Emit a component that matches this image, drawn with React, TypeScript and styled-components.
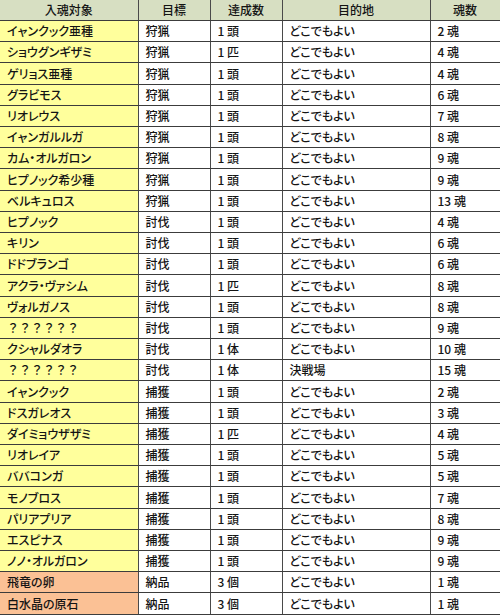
import React from 'react'
import styled, { createGlobalStyle } from 'styled-components'

type Kind = 'monster' | 'item'

interface RowData {
  target: string
  goal: string
  count: string
  place: string
  souls: string
  kind: Kind
}

const rows: RowData[] = [
  { target: 'イャンクック亜種', goal: '狩猟', count: '1 頭', place: 'どこでもよい', souls: '2 魂', kind: 'monster' },
  { target: 'ショウグンギザミ', goal: '狩猟', count: '1 匹', place: 'どこでもよい', souls: '4 魂', kind: 'monster' },
  { target: 'ゲリョス亜種', goal: '狩猟', count: '1 頭', place: 'どこでもよい', souls: '4 魂', kind: 'monster' },
  { target: 'グラビモス', goal: '狩猟', count: '1 頭', place: 'どこでもよい', souls: '6 魂', kind: 'monster' },
  { target: 'リオレウス', goal: '狩猟', count: '1 頭', place: 'どこでもよい', souls: '7 魂', kind: 'monster' },
  { target: 'イャンガルルガ', goal: '狩猟', count: '1 頭', place: 'どこでもよい', souls: '8 魂', kind: 'monster' },
  { target: 'カム・オルガロン', goal: '狩猟', count: '1 頭', place: 'どこでもよい', souls: '9 魂', kind: 'monster' },
  { target: 'ヒプノック希少種', goal: '狩猟', count: '1 頭', place: 'どこでもよい', souls: '9 魂', kind: 'monster' },
  { target: 'ベルキュロス', goal: '狩猟', count: '1 頭', place: 'どこでもよい', souls: '13 魂', kind: 'monster' },
  { target: 'ヒプノック', goal: '討伐', count: '1 頭', place: 'どこでもよい', souls: '4 魂', kind: 'monster' },
  { target: 'キリン', goal: '討伐', count: '1 頭', place: 'どこでもよい', souls: '6 魂', kind: 'monster' },
  { target: 'ドドブランゴ', goal: '討伐', count: '1 頭', place: 'どこでもよい', souls: '6 魂', kind: 'monster' },
  { target: 'アクラ・ヴァシム', goal: '討伐', count: '1 匹', place: 'どこでもよい', souls: '8 魂', kind: 'monster' },
  { target: 'ヴォルガノス', goal: '討伐', count: '1 頭', place: 'どこでもよい', souls: '8 魂', kind: 'monster' },
  { target: '？？？？？？', goal: '討伐', count: '1 頭', place: 'どこでもよい', souls: '9 魂', kind: 'monster' },
  { target: 'クシャルダオラ', goal: '討伐', count: '1 体', place: 'どこでもよい', souls: '10 魂', kind: 'monster' },
  { target: '？？？？？？', goal: '討伐', count: '1 体', place: '決戦場', souls: '15 魂', kind: 'monster' },
  { target: 'イャンクック', goal: '捕獲', count: '1 頭', place: 'どこでもよい', souls: '2 魂', kind: 'monster' },
  { target: 'ドスガレオス', goal: '捕獲', count: '1 頭', place: 'どこでもよい', souls: '3 魂', kind: 'monster' },
  { target: 'ダイミョウザザミ', goal: '捕獲', count: '1 匹', place: 'どこでもよい', souls: '4 魂', kind: 'monster' },
  { target: 'リオレイア', goal: '捕獲', count: '1 頭', place: 'どこでもよい', souls: '5 魂', kind: 'monster' },
  { target: 'ババコンガ', goal: '捕獲', count: '1 頭', place: 'どこでもよい', souls: '5 魂', kind: 'monster' },
  { target: 'モノブロス', goal: '捕獲', count: '1 頭', place: 'どこでもよい', souls: '7 魂', kind: 'monster' },
  { target: 'パリアプリア', goal: '捕獲', count: '1 頭', place: 'どこでもよい', souls: '8 魂', kind: 'monster' },
  { target: 'エスピナス', goal: '捕獲', count: '1 頭', place: 'どこでもよい', souls: '9 魂', kind: 'monster' },
  { target: 'ノノ・オルガロン', goal: '捕獲', count: '1 頭', place: 'どこでもよい', souls: '9 魂', kind: 'monster' },
  { target: '飛竜の卵', goal: '納品', count: '3 個', place: 'どこでもよい', souls: '1 魂', kind: 'item' },
  { target: '白水晶の原石', goal: '納品', count: '3 個', place: 'どこでもよい', souls: '1 魂', kind: 'item' }
]

const headings = ['入魂対象', '目標', '達成数', '目的地', '魂数']
const widths = [138, 72, 72, 148, 70]

const GlobalStyle = createGlobalStyle`
  body {
    margin: 0;
    background: #fff;
    font-family: "Noto Sans CJK JP", "Liberation Sans", sans-serif;
  }
`

const SoulTable = styled.table`
  width: 500px;
  height: 615px;
  border-collapse: collapse;
  table-layout: fixed;
  font-size: 12px;
  font-weight: 500;
  color: #141414;
  font-feature-settings: 'palt';
`

const HeadCell = styled.th`
  height: 20px;
  padding: 0;
  background: #d7dfc2;
  font-weight: 500;
  text-align: center;
  border-right: 1px solid #4a4a4a;
  border-bottom: 1px solid #3c3c3c;
  line-height: 1;
`

const Cell = styled.td<{ $fill?: string; $fullWidth?: boolean }>`
  padding: 0 0 0 7px;
  background: ${p => p.$fill || '#fff'};
  border-right: 1px solid #4a4a4a;
  border-bottom: 1px solid #3c3c3c;
  white-space: nowrap;
  line-height: 1;
  font-feature-settings: ${p => (p.$fullWidth ? 'normal' : "'palt'")};
`

const fills: Record<Kind, string> = {
  monster: '#ffff9c',
  item: '#fbc195'
}

const App: React.FC = () => (
  <>
    <GlobalStyle />
    <SoulTable>
      <colgroup>
        {widths.map((w, i) => (
          <col key={i} style={{ width: w }} />
        ))}
      </colgroup>
      <thead>
        <tr>
          {headings.map(h => (
            <HeadCell key={h}>{h}</HeadCell>
          ))}
        </tr>
      </thead>
      <tbody>
        {rows.map((row, index) => (
          <tr key={index}>
            <Cell $fill={fills[row.kind]} $fullWidth={row.target.startsWith('？')}>
              {row.target}
            </Cell>
            <Cell>{row.goal}</Cell>
            <Cell>{row.count}</Cell>
            <Cell>{row.place}</Cell>
            <Cell>{row.souls}</Cell>
          </tr>
        ))}
      </tbody>
    </SoulTable>
  </>
)

export default App
